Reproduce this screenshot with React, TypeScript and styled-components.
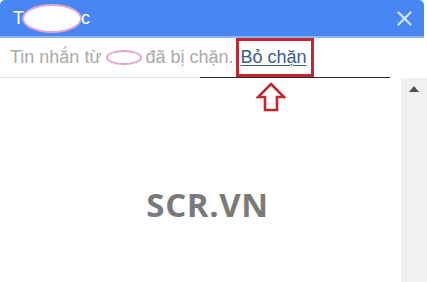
import React from "react";
import styled, { createGlobalStyle } from "styled-components";

const Global = createGlobalStyle`
  html, body { margin: 0; padding: 0; background: #ffffff; }
  body { width: 427px; height: 282px; overflow: hidden; font-family: "Liberation Sans", Arial, sans-serif; }
`;

const Window = styled.div`
  position: relative;
  width: 427px;
  height: 282px;
  display: flex;
  flex-direction: column;
  background: #ffffff;
`;

const Header = styled.div`
  height: 38px;
  margin-right: 3px;
  background: #4786f3;
  border-radius: 5px 5px 0 0;
  display: flex;
  align-items: center;
  justify-content: space-between;
  padding: 0 12px 0 13px;
  box-sizing: border-box;
  border-bottom: 2px solid #8fb4f6;
`;

const Title = styled.div`
  display: flex;
  align-items: center;
  color: #ffffff;
  font-size: 18px;
  line-height: 1;
`;

const Blur = styled.span<{ $w: number; $h: number; $fill: string; $ml: number; $mr: number }>`
  display: inline-block;
  width: ${(p) => p.$w}px;
  height: ${(p) => p.$h}px;
  border-radius: 50%;
  background: ${(p) => p.$fill};
  border: 2px solid #e3a4cf;
  box-sizing: border-box;
  margin: 0 ${(p) => p.$mr}px 0 ${(p) => p.$ml}px;
`;

const Close = styled.button`
  border: 0;
  background: transparent;
  padding: 0;
  width: 16px;
  height: 16px;
  display: flex;
  align-items: center;
  justify-content: center;
`;

const Notice = styled.div`
  height: 39px;
  display: flex;
  align-items: stretch;
  padding-left: 10px;
  font-size: 18px;
  color: #a9a9a9;
`;

const NoticeText = styled.span`
  display: flex;
  align-items: center;
  white-space: pre;
`;

const Marked = styled.span`
  display: flex;
  align-items: center;
  border: 3px solid #c1272d;
  padding: 0 4px 0 2px;
  margin-left: 2px;
  box-sizing: border-box;
`;

const Link = styled.a`
  color: #3a5a8f;
  text-decoration: underline;
  text-underline-offset: 2px;
  text-decoration-thickness: 1px;
  cursor: pointer;
`;

const Divider = styled.div`
  display: flex;
  height: 1px;
  margin-right: 37px;
  background: #e4e4e4;
`;

const DarkSegment = styled.div`
  margin-left: 200px;
  flex: 1;
  background: #2a2a2a;
`;

const Body = styled.div`
  flex: 1;
  display: flex;
  min-height: 0;
`;

const Content = styled.div`
  flex: 1;
  display: flex;
  align-items: center;
  justify-content: center;
  padding: 48px 0 0 14px;
`;

const Watermark = styled.div`
  font-family: "Open Sans", "Noto Sans", sans-serif;
  font-weight: 700;
  font-size: 33px;
  color: #7a7a7a;
  letter-spacing: 0.6px;
`;

const Scrollbar = styled.div`
  width: 26px;
  background: #f1f1f1;
  display: flex;
  flex-direction: column;
  align-items: center;
  padding-top: 8px;
  box-sizing: border-box;
`;

const ArrowAnnot = styled.svg`
  position: absolute;
  left: 256px;
  top: 82px;
`;

export default function App() {
  return (
    <>
      <Global />
      <Window>
        <Header>
          <Title>
            T<Blur $w={60} $h={29} $fill="#ffffff" $ml={-2} $mr={-1} />c
          </Title>
          <Close aria-label="Đóng">
            <svg width="15" height="15" viewBox="0 0 15 15">
              <path d="M1.5 1.5 L13.5 13.5 M13.5 1.5 L1.5 13.5" stroke="#d2e0fb" strokeWidth="2.4" strokeLinecap="round" />
            </svg>
          </Close>
        </Header>
        <Notice>
          <NoticeText>
            Tin nhắn từ<Blur $w={36} $h={15} $fill="transparent" $ml={5} $mr={3} />đã bị chặn.
          </NoticeText>
          <Marked>
            <Link>Bỏ chặn</Link>
          </Marked>
        </Notice>
        <Divider>
          <DarkSegment />
        </Divider>
        <Body>
          <Content>
            <Watermark>SCR.VN</Watermark>
          </Content>
          <Scrollbar>
            <svg width="10" height="6" viewBox="0 0 10 6">
              <path d="M0 6 L5 0 L10 6 Z" fill="#505050" />
            </svg>
          </Scrollbar>
        </Body>
        <ArrowAnnot width="30" height="30" viewBox="0 0 30 30">
          <path
            d="M15 2 L28 15 L21 15 L21 28 L9 28 L9 15 L2 15 Z"
            fill="#ffffff"
            stroke="#c1272d"
            strokeWidth="2.6"
            strokeLinejoin="miter"
          />
        </ArrowAnnot>
      </Window>
    </>
  );
}
